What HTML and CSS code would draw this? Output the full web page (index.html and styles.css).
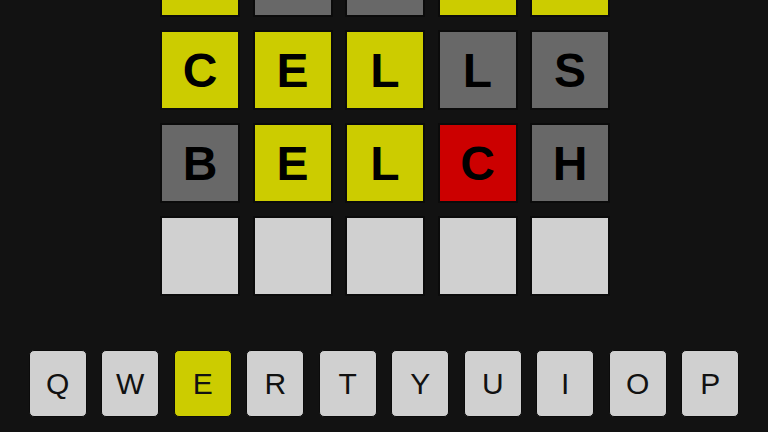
FILE: index.html
```html
<!DOCTYPE html>
<html lang="en">
<head>
<meta charset="utf-8">
<title>Wordle</title>
<link rel="stylesheet" href="styles.css">
</head>
<body>
<main class="game">
  <div class="board">
    <div class="tile present"></div>
    <div class="tile absent"></div>
    <div class="tile absent"></div>
    <div class="tile present"></div>
    <div class="tile present"></div>

    <div class="tile present">C</div>
    <div class="tile present">E</div>
    <div class="tile present">L</div>
    <div class="tile absent">L</div>
    <div class="tile absent">S</div>

    <div class="tile absent">B</div>
    <div class="tile present">E</div>
    <div class="tile present">L</div>
    <div class="tile wrong">C</div>
    <div class="tile absent">H</div>

    <div class="tile empty"></div>
    <div class="tile empty"></div>
    <div class="tile empty"></div>
    <div class="tile empty"></div>
    <div class="tile empty"></div>
  </div>

  <div class="keyboard">
    <div class="key-row">
      <button class="key">Q</button>
      <button class="key">W</button>
      <button class="key used">E</button>
      <button class="key">R</button>
      <button class="key">T</button>
      <button class="key">Y</button>
      <button class="key">U</button>
      <button class="key">I</button>
      <button class="key">O</button>
      <button class="key">P</button>
    </div>
  </div>
</main>
</body>
</html>
```
FILE: styles.css
```css
html, body {
  margin: 0;
  padding: 0;
  background: #121212;
  height: 432px;
  overflow: hidden;
}

.game {
  display: flex;
  flex-direction: column;
  align-items: center;
  font-family: "Liberation Sans", Arial, sans-serif;
}

.board {
  display: grid;
  grid-template-columns: repeat(5, 80px);
  grid-auto-rows: 80px;
  column-gap: 12.5px;
  row-gap: 13px;
  margin-top: -63px;
  margin-left: 2px;
}

.tile {
  box-sizing: border-box;
  border: 2px solid #0b0b0b;
  display: flex;
  align-items: center;
  justify-content: center;
  font-size: 48px;
  font-weight: bold;
  color: #000;
}

.present { background: #cccc00; }
.absent { background: #686868; }
.wrong { background: #cc0000; }
.empty { background: #d0d0d0; }

.keyboard {
  margin-top: 54px;
  display: flex;
  flex-direction: column;
  gap: 16px;
}

.key-row {
  display: flex;
  gap: 14.5px;
}

.key {
  box-sizing: border-box;
  width: 58px;
  height: 67px;
  padding: 0;
  border: 1px solid #0b0b0b;
  border-radius: 5px;
  background: #d0d0d0;
  color: #111;
  font-family: "Liberation Sans", Arial, sans-serif;
  font-size: 30px;
  line-height: 1;
  display: flex;
  align-items: center;
  justify-content: center;
}

.key.used { background: #cccc00; }
```
